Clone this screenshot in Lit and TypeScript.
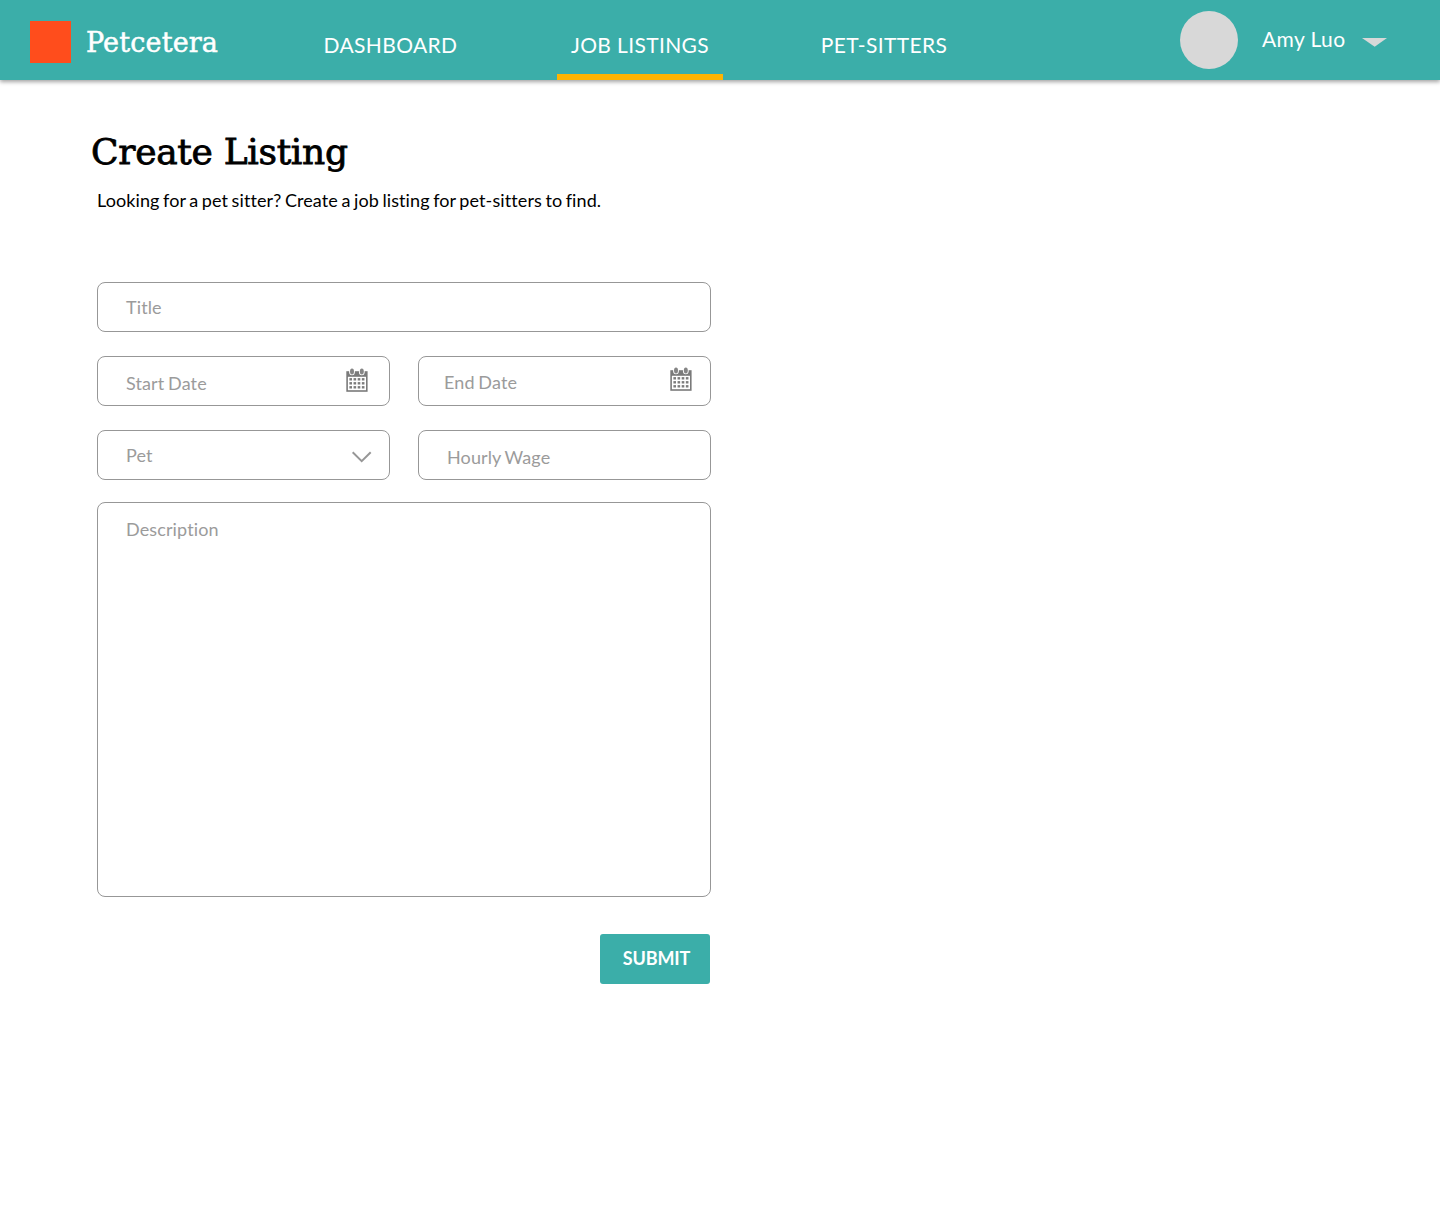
import { LitElement, html, css, svg } from "lit";
import { customElement } from "lit/decorators.js";

const dots: [number, number][] = [];
for (let r = 0; r < 3; r++) for (let c = 0; c < 4; c++) dots.push([3.4 + c * 4.15, 10.1 + r * 4]);

const calendar = html`<svg width="22" height="24" viewBox="0 0 22 24">
  <path d="M.3 3.2h21.3v20.6H.3z" fill="#7a7a7a" />
  <path d="M1.9 8.8h18.1v13.4H1.9z" fill="#fff" />
  <ellipse cx="6" cy="3.7" rx="2.9" ry="3.5" fill="#fff" />
  <ellipse cx="15.8" cy="3.7" rx="2.9" ry="3.5" fill="#fff" />
  <ellipse cx="6" cy="3.5" rx="2" ry="2.9" fill="#858585" />
  <ellipse cx="15.8" cy="3.5" rx="2" ry="2.9" fill="#858585" />
  ${dots.map(([x, y]) => svg`<rect x=${x} y=${y} width="2.6" height="2.4" fill="#7c7c7c" />`)}
</svg>`;

@customElement("app-root")
export class AppRoot extends LitElement {
  static styles = css`
    :host { display: block; height: 1210px; background: #fff; font-family: Lato, sans-serif; overflow: hidden; font-variant-ligatures: none; }
    * { box-sizing: border-box; }
    svg { display: block; flex: none; }
    .bar { display: flex; height: 80px; background: #3baea9; box-shadow: 0 2px 4px rgba(0, 0, 0, 0.36); color: #fff; white-space: nowrap; }
    .logo { width: 41px; height: 42px; margin: 21px 0 0 30px; background: #ff4d1c; }
    .brand { width: 215px; margin: 26px 0 0 15px; font: 27px/34px "DejaVu Serif", serif; letter-spacing: 0.15px; -webkit-text-stroke: 0.5px #fff; }
    .nav { display: flex; gap: 84px; font-size: 21px; letter-spacing: 0.36px; line-height: 26px; }
    .tab { height: 80px; padding-top: 32px; text-align: center; }
    .dash { width: 166px; margin-left: 6px; padding-left: 1px; }
    .jobs { width: 166px; border-bottom: 6px solid #ffb400; }
    .sitters { width: 154px; }
    .user { display: flex; margin-left: auto; padding-right: 53px; }
    .avatar { width: 58px; height: 58px; margin-top: 11px; border-radius: 50%; background: #d8d8d8; }
    .name { width: 100px; margin: 26px 0 0 24px; font-size: 21px; line-height: 26px; letter-spacing: 0.4px; }
    .caret { margin-top: 37px; }
    .main { width: 711px; padding: 48px 0 0 97px; }
    .heading { margin: 0 0 0 -6px; font: 36px/48px "DejaVu Serif", serif; color: #000; white-space: nowrap; letter-spacing: -0.3px; -webkit-text-stroke: 0.8px #000; }
    .intro { margin: 13px 0 0; font-size: 18px; line-height: 22px; letter-spacing: 0.1px; word-spacing: -1.2px; color: #000; white-space: nowrap; }
    .form { display: grid; grid-template-columns: 293px 293px; column-gap: 28px; row-gap: 24px; margin-top: 71px; }
    .field { display: flex; justify-content: space-between; height: 50px; padding: 13px 19px 0 28px; border: 1px solid #979797; border-radius: 8px; font-size: 18px; line-height: 22px; letter-spacing: 0.12px; word-spacing: -1px; color: #9b9b9b; }
    .wide { grid-column: 1 / 3; }
    .start { padding: 15px 21px 0 28px; }
    .start svg { margin-top: -4px; }
    .end { padding: 14px 18px 0 25px; }
    .end svg { margin-top: -4px; }
    .pet { padding-right: 17px; }
    .pet svg { margin-top: 7px; }
    .wage { padding-top: 15px; }
    .desc { height: 395px; padding-top: 15px; margin-top: -2px; }
    .submit { display: block; width: 110px; height: 50px; margin: 37px 1px 0 auto; padding: 0 0 2px 3px; border: 0; border-radius: 3px; background: #3baea9; color: #fff; font: bold 18px/22px Lato, sans-serif; letter-spacing: -0.1px; }
  `;

  render() {
    return html`
      <header class="bar">
        <div class="logo"></div>
        <div class="brand">Petcetera</div>
        <nav class="nav">
          <div class="tab dash">DASHBOARD</div>
          <div class="tab jobs">JOB LISTINGS</div>
          <div class="tab sitters">PET-SITTERS</div>
        </nav>
        <div class="user">
          <div class="avatar"></div>
          <div class="name">Amy Luo</div>
          <svg class="caret" width="25" height="10" viewBox="0 0 25 10"><path d="M0 1h25L12.7 9.8z" fill="#d8d8d8" /></svg>
        </div>
      </header>
      <main class="main">
        <h1 class="heading">Create Listing</h1>
        <p class="intro">Looking for a pet sitter? Create a job listing for pet-sitters to find.</p>
        <div class="form">
          <div class="field wide"><span>Title</span></div>
          <div class="field start"><span>Start Date</span>${calendar}</div>
          <div class="field end"><span>End Date</span>${calendar}</div>
          <div class="field pet"><span>Pet</span>
            <svg width="21" height="12" viewBox="0 0 21 12"><path d="M1.7 1.2l9 9 9-9" fill="none" stroke="#979797" stroke-width="2" /></svg>
          </div>
          <div class="field wage"><span>Hourly Wage</span></div>
          <div class="field wide desc"><span>Description</span></div>
        </div>
        <button class="submit">SUBMIT</button>
      </main>
    `;
  }
}
